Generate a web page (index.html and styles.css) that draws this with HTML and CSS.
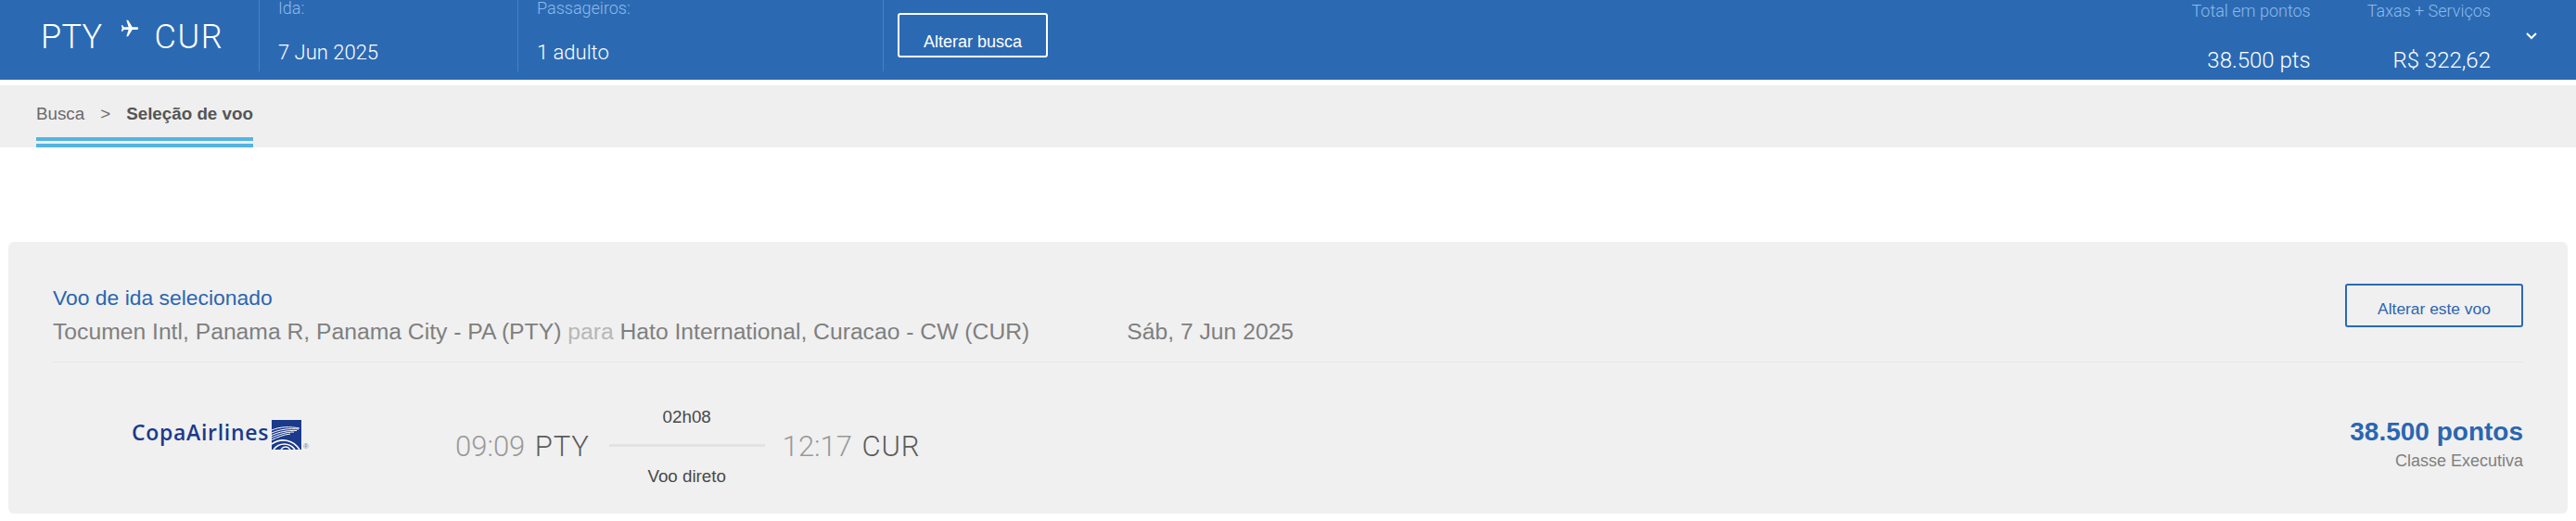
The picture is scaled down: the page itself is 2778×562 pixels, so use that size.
FILE: index.html
```html
<!DOCTYPE html>
<html lang="pt-BR">
<head>
  <meta charset="UTF-8" />
  <meta name="viewport" content="width=device-width, initial-scale=1" />
  <title>Seleção de voo</title>
  <link rel="stylesheet" href="styles.css">
</head>
<body>
  <header class="topbar">
    <div class="trip">
      <span>PTY</span>
      <svg class="plane" viewBox="0 0 24 24"><path transform="rotate(90 12 12)" d="M21 16v-2l-8-5V3.5c0-.83-.67-1.5-1.5-1.5S10 2.67 10 3.5V9l-8 5v2l8-2.5V19l-2 1.5V22l3.5-1 3.5 1v-1.5L13 19v-5.5l8 2.5z"/></svg>
      <span class="trip-to">CUR</span>
    </div>
    <div class="field">
      <div class="field-label">Ida:</div>
      <div class="field-value">7 Jun 2025</div>
    </div>
    <div class="field field-pax">
      <div class="field-label">Passageiros:</div>
      <div class="field-value">1 adulto</div>
    </div>
    <button class="btn-search">Alterar busca</button>
    <div class="total total-points">
      <div class="total-label">Total em pontos</div>
      <div class="total-value">38.500 pts</div>
    </div>
    <div class="total total-fees">
      <div class="total-label">Taxas + Serviços</div>
      <div class="total-value">R$ 322,62</div>
    </div>
    <svg class="chevron" viewBox="0 0 12 8"><path d="M1 1l5 5 5-5"/></svg>
  </header>

  <nav class="crumbs">
    <div class="crumb-tab">
      <span class="crumb">Busca</span>
      <span class="crumb-sep">&gt;</span>
      <strong class="crumb-current">Seleção de voo</strong>
    </div>
  </nav>

  <section class="card">
    <div class="card-head">
      <div class="card-title">
        <div class="selected">Voo de ida selecionado</div>
        <div class="places">Tocumen Intl, Panama R, Panama City - PA (PTY) <span class="para">para</span> Hato International, Curacao - CW (CUR)<span class="date">Sáb, 7 Jun 2025</span></div>
      </div>
      <button class="btn-change">Alterar este voo</button>
    </div>

    <div class="flight">
      <div class="airline">
        <span class="airline-name">CopaAirlines</span>
        <svg class="airline-mark" viewBox="0 0 32 32">
          <rect width="32" height="32" fill="#1b3a8c"/>
          <g fill="none" stroke="#fff">
            <path d="M0 11C9 7 20 7 30 9" stroke-width="1"/>
            <path d="M0 14C9 10 19 9 29 10" stroke-width="1"/>
            <path d="M0 16.500C8 13 17 11 27 11.500" stroke-width="1"/>
            <path d="M0 19C7 16 15 13 24 13" stroke-width="1"/>
            <path d="M0 21.500C6 19 12 16 20 15" stroke-width="1"/>
            <path d="M0 26C10 19 23 21 30 32" stroke-width="1.6"/>
            <path d="M2 32C8 24 19 24 25 32" stroke-width="1.6"/>
            <path d="M10 32C13 28 17 28 20 32" stroke-width="1.4"/>
          </g>
        </svg>
        <span class="airline-reg">®</span>
      </div>
      <div class="stop"><span class="time">09:09</span> <span class="code">PTY</span></div>
      <div class="leg">
        <div class="leg-time">02h08</div>
        <div class="leg-line"></div>
        <div class="leg-type">Voo direto</div>
      </div>
      <div class="stop"><span class="time">12:17</span> <span class="code">CUR</span></div>
      <div class="price">
        <div class="price-value">38.500 pontos</div>
        <div class="price-class">Classe Executiva</div>
      </div>
    </div>
  </section>
</body>
</html>
```

FILE: styles.css
```css
body {
  margin: 0;
  background: #fff;
  font-family: "Liberation Sans", Arial, sans-serif;
  overflow: hidden;
}

.topbar {
  display: flex;
  height: 86px;
  background: #2b6ab3;
  color: #fff;
  box-sizing: border-box;
  font-family: Roboto, "Liberation Sans", sans-serif;
  font-weight: 300;
}

.trip {
  display: flex;
  align-items: flex-start;
  width: 280px;
  height: 77px;
  box-sizing: border-box;
  padding: 20px 0 0 44px;
  border-right: 1px solid #4a80c0;
  font-size: 36px;
  line-height: 40px;
  letter-spacing: 0.3px;
}

.plane {
  width: 22px;
  height: 22px;
  margin: 0 15px 0 19px;
  fill: #fff;
}

.trip-to {
  letter-spacing: 1.6px;
}

.field {
  width: 279px;
  height: 77px;
  box-sizing: border-box;
  padding-left: 20px;
  border-right: 1px solid #4a80c0;
}

.field-label {
  font-size: 18px;
  line-height: 18px;
  color: #8fb9e8;
}

.field-value {
  margin-top: 29px;
  font-size: 22px;
  line-height: 20px;
}

.field-pax {
  width: 394px;
}

.btn-search {
  width: 162px;
  height: 48px;
  margin: 14px 0 0 15px;
  padding: 14px 0 0;
  background: transparent;
  border: 2px solid #fff;
  border-radius: 3px;
  color: #fff;
  font-family: "Liberation Sans", Arial, sans-serif;
  font-size: 18px;
}

.total {
  text-align: right;
}

.total-points {
  margin-left: auto;
}

.total-fees {
  margin-left: 61px;
}

.total-label {
  margin-top: 3px;
  font-size: 18px;
  line-height: 18px;
  color: #8fb9e8;
}

.total-value {
  margin-top: 31px;
  font-size: 24px;
  line-height: 26px;
}

.chevron {
  width: 12px;
  height: 8px;
  margin: 35px 42px 0 38px;
  fill: none;
  stroke: #fff;
  stroke-width: 2;
}

.crumbs {
  height: 67px;
  margin-top: 6px;
  padding-left: 39px;
  background: #efefef;
  box-sizing: border-box;
}

.crumb-tab {
  display: inline-flex;
  align-items: center;
  height: 67px;
  box-sizing: border-box;
  padding-top: 6px;
  border-bottom: 11px double #54b4e4;
  font-size: 18.8px;
}

.crumb {
  color: #6a6a6a;
}

.crumb-sep {
  margin: 0 17px;
  color: #6a6a6a;
}

.crumb-current {
  color: #555;
}

.card {
  height: 293px;
  margin: 102px 9px 0;
  padding: 0 48px;
  background: #f0f0f0;
  border-radius: 6px;
  box-sizing: border-box;
}

.card-head {
  display: flex;
  justify-content: space-between;
  height: 130px;
  padding-top: 45px;
  box-sizing: border-box;
  border-bottom: 1px solid #e6e6e6;
}

.selected {
  margin-top: -2px;
  font-size: 22.9px;
  line-height: 34px;
  color: #2b66b0;
}

.places {
  margin-top: 2px;
  font-size: 24.7px;
  line-height: 36px;
  color: #7f7f7f;
}

.para {
  color: #b7b7b7;
}

.date {
  margin-left: 105px;
}

.btn-change {
  width: 192px;
  height: 47px;
  padding: 7px 0 0;
  background: transparent;
  border: 2px solid #2b6ab3;
  border-radius: 3px;
  color: #2b66b0;
  font-family: "Liberation Sans", Arial, sans-serif;
  font-size: 17.4px;
}

.flight {
  display: flex;
  align-items: flex-start;
  height: 162px;
}

.airline {
  display: flex;
  align-items: flex-start;
  width: 434px;
  box-sizing: border-box;
  padding: 62px 0 0 85px;
}

.airline-name {
  width: 151px;
  font-family: "Open Sans", "Liberation Sans", sans-serif;
  font-size: 23px;
  line-height: 26px;
  font-weight: 600;
  color: #1b3a8c;
  letter-spacing: 0.7px;
}

.airline-mark {
  width: 32px;
  height: 32px;
}

.airline-reg {
  margin: 24px 0 0 2px;
  font-size: 8px;
  line-height: 10px;
  color: #6b7aa6;
}

.stop {
  margin-top: 73px;
  font-family: Roboto, "Liberation Sans", sans-serif;
  font-weight: 300;
  font-size: 31px;
  line-height: 36px;
  white-space: nowrap;
}

.time {
  color: #999;
}

.code {
  margin-left: 3px;
  letter-spacing: 0.8px;
  color: #5c5c5c;
}

.leg {
  width: 168px;
  margin: 48px 19px 0 21px;
  text-align: center;
  font-size: 18.8px;
  line-height: 22px;
  color: #484848;
}

.leg-line {
  height: 3px;
  margin: 18px 0 21px;
  background: #e2e2e2;
}

.price {
  margin-left: auto;
  padding-top: 59px;
  text-align: right;
}

.price-value {
  font-size: 28px;
  line-height: 32px;
  font-weight: bold;
  color: #2b66b0;
}

.price-class {
  margin-top: 4px;
  font-size: 18px;
  line-height: 22px;
  color: #808080;
}
```
